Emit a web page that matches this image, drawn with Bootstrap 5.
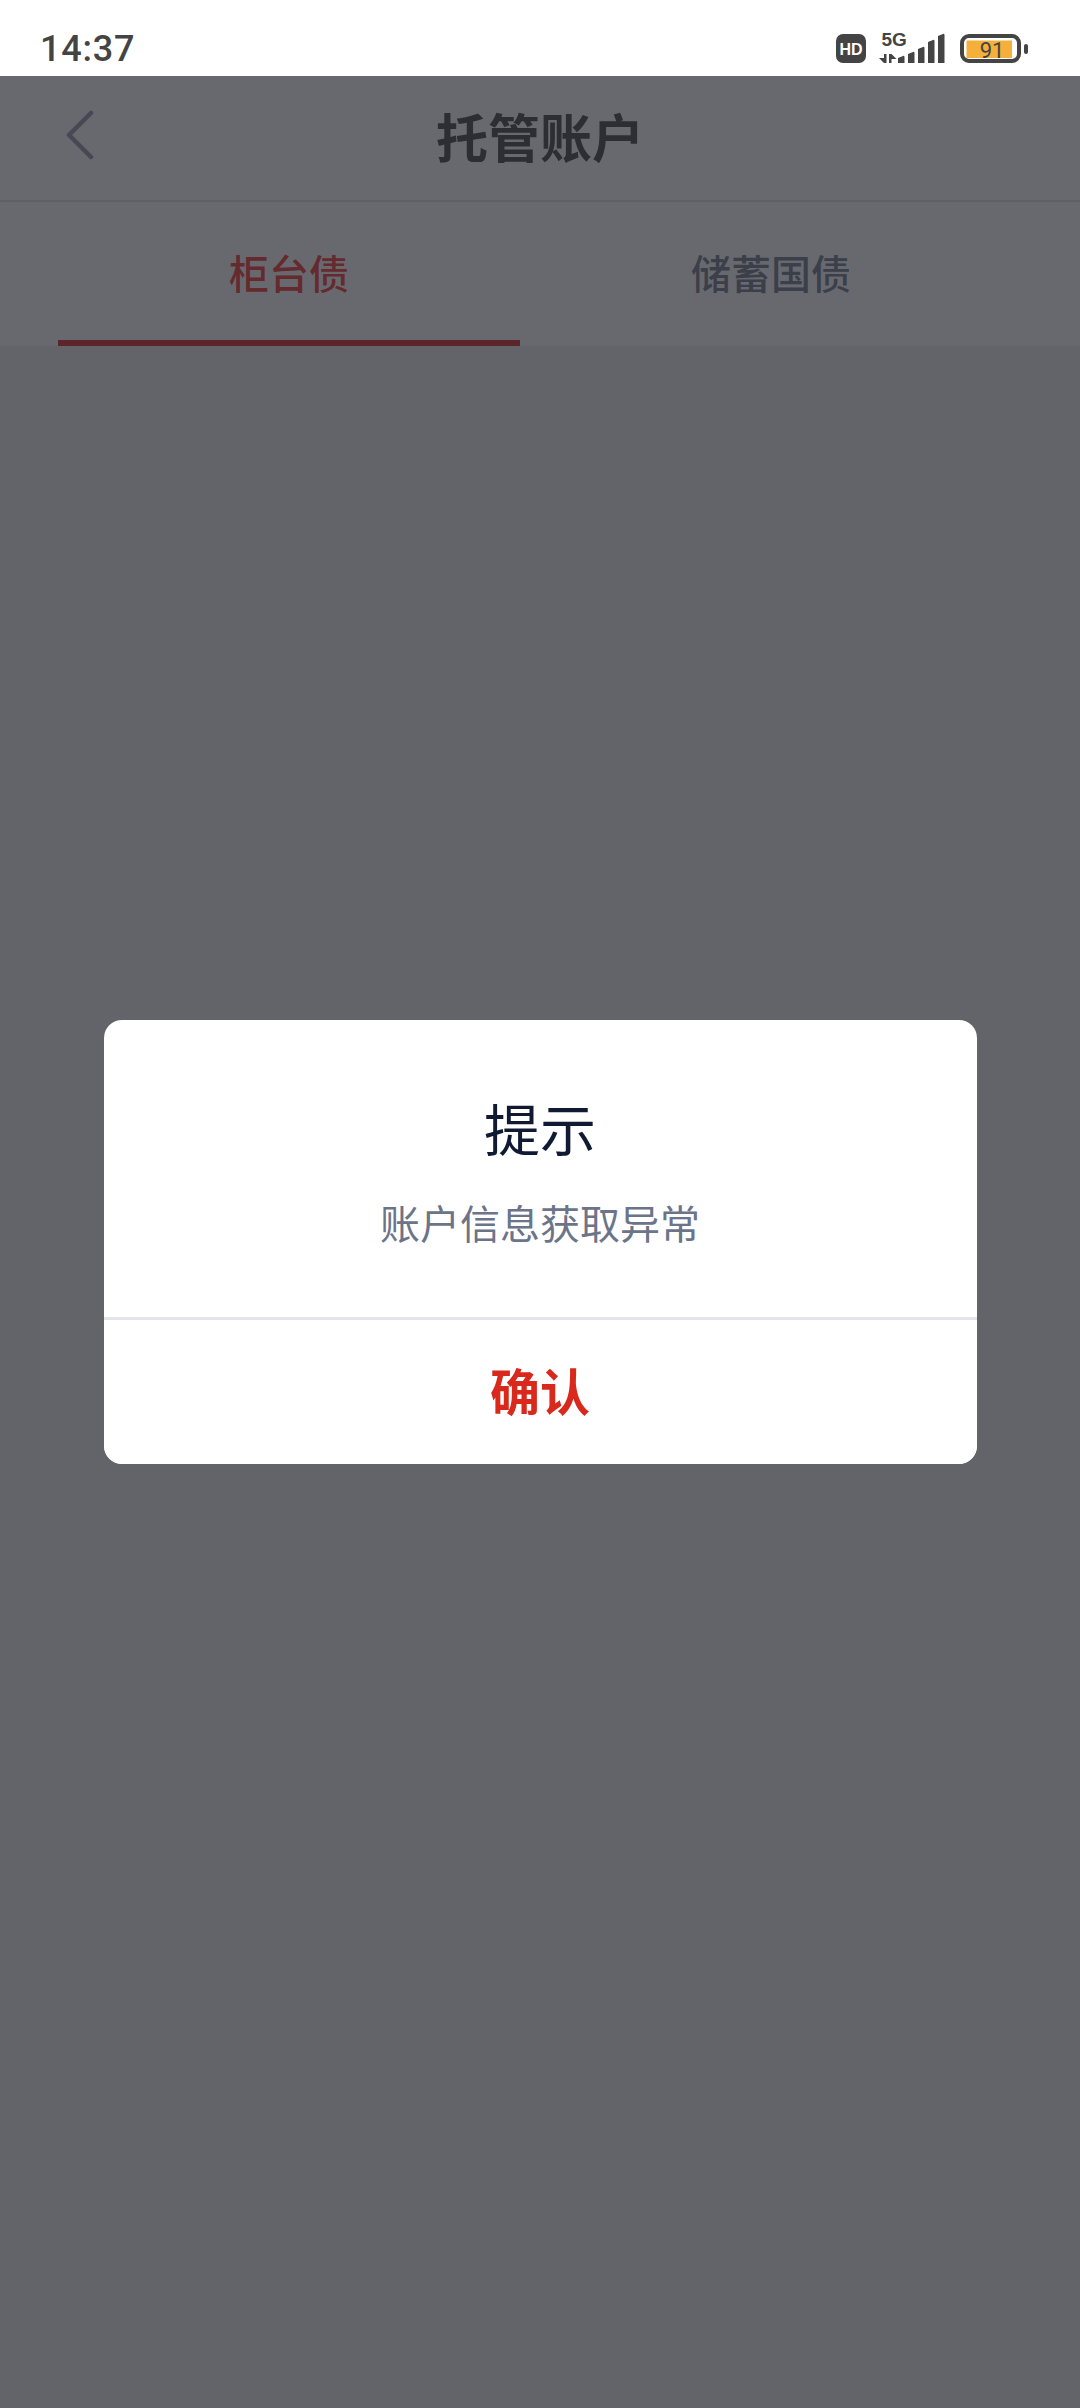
<!DOCTYPE html>
<html lang="zh-CN">
<head>
<meta charset="utf-8">
<title>托管账户</title>
<link href="https://cdn.jsdelivr.net/npm/bootstrap@5.3.0/dist/css/bootstrap.min.css" rel="stylesheet">
<style>
html,body{height:100%;margin:0}
body{width:1080px;height:2408px;overflow:hidden;background:#fff;font-family:"Noto Sans CJK SC","Liberation Sans",sans-serif}
.status-strip{height:76px;padding:0 51px 0 40px;background:#fff}
.clock-text{font:500 36px/1 Roboto,sans-serif;color:#444;letter-spacing:.8px;margin-top:31px}
.status-icons{margin-top:26px}
.icon-hd{margin-right:13px}
.icon-net{margin-right:15px}
.app-area{height:2332px}
.top-bar{height:126px;background:#68696e;border-bottom:2px solid #5f6065;position:relative}
.back-arrow{margin:0 0 7px 65px;width:30px;height:50px}
.page-title{position:absolute;left:0;right:0;top:0;bottom:0;display:flex;align-items:center;justify-content:center;margin:0;padding-bottom:5px;font-size:52px;font-weight:700;line-height:1;color:#2c2e34}
.tab-strip{height:144px;background:#68696e;padding:0 58px}
.tab-item{flex:1 1 auto;font-size:40px;font-weight:500;line-height:1;color:#3b3f4a;text-align:center;padding:0 171px;background:transparent;border:0;border-bottom:6px solid transparent;border-radius:0}
.tab-item.is-on{color:#642a2e;border-bottom-color:#5c2529}
.tab-label{position:relative;top:1px}
.page-body{background:#636469;height:2062px}
.dim-layer{position:absolute;inset:0}
.notice-box{width:873px;height:444px;border:0;border-radius:18px;background:#fff}
.notice-main{height:297px;padding-top:79px}
.notice-title{font-size:56px;font-weight:400;line-height:1;color:#111a33;margin:0 0 47px}
.notice-text{font-size:40px;font-weight:400;line-height:1;color:#6b7488;margin:0}
.notice-action{height:147px;background:#fff;border:0;border-top:3px solid #e4e5ea;border-radius:0 0 18px 18px;font-size:50px;font-weight:700;line-height:1;color:#d9291c;padding:0 0 7px}
</style>
</head>
<body>
<div class="status-strip d-flex justify-content-between align-items-start">
  <div class="clock-text">14:37</div>
  <div class="status-icons d-flex align-items-start">
    <svg class="icon-hd" width="30" height="40" viewBox="0 -5 30 40"><rect width="30" height="29" y="3" rx="7" fill="#444"/><text x="15" y="23.500" text-anchor="middle" font-family="Liberation Sans" font-weight="700" font-size="16" fill="#fff">HD</text></svg>
    <svg class="icon-net" width="66" height="40" viewBox="0 -5 66 40"><text x="2.500" y="15" font-family="Liberation Sans" font-weight="700" font-size="19" fill="#444">5G</text>
      <path d="M5 23h2.500v9H5l-5-5h5zM10 23h2.500l5 5h-5v4H10z" fill="#444"/>
      <path d="M19 27l5-2a1 1 0 0 1 1.500 1v6H19zM29 23l5-2a1 1 0 0 1 1.500 1v10H29zM39 18l5-2a1 1 0 0 1 1.500 1v15H39zM49 11l5-2a1 1 0 0 1 1.500 1v22H49zM59 5l5-2a1 1 0 0 1 1.500 1v28H59z" fill="#444"/></svg>
    <svg width="69" height="40" viewBox="0 -5 69 40"><rect x="2" y="5" width="57" height="25" rx="7" fill="#fff" stroke="#444" stroke-width="4"/><rect x="6.500" y="9.500" width="45.500" height="17.500" fill="#f5b03b"/><rect x="64" y="13" width="4" height="10" rx="2" fill="#444"/><text x="32" y="26.500" text-anchor="middle" font-family="Roboto" font-size="22" fill="#444">91</text></svg>
  </div>
</div>
<div class="app-area position-relative">
  <header class="top-bar d-flex align-items-center">
    <svg class="back-arrow" viewBox="0 0 30 50"><path d="M26 3L4 25l22 22" fill="none" stroke="#464954" stroke-width="4.500" stroke-linecap="round" stroke-linejoin="round"/></svg>
    <h1 class="page-title">托管账户</h1>
  </header>
  <nav class="tab-strip d-flex align-items-stretch">
    <button class="tab-item is-on"><span class="tab-label">柜台债</span></button>
    <button class="tab-item"><span class="tab-label">储蓄国债</span></button>
  </nav>
  <main class="page-body"></main>
  <div class="dim-layer d-flex align-items-center justify-content-center">
    <div class="notice-box card overflow-hidden">
      <div class="notice-main text-center">
        <h2 class="notice-title">提示</h2>
        <p class="notice-text">账户信息获取异常</p>
      </div>
      <button class="notice-action w-100 btn">确认</button>
    </div>
  </div>
</div>
<script src="https://cdn.jsdelivr.net/npm/bootstrap@5.3.0/dist/js/bootstrap.bundle.min.js"></script>
</body>
</html>
